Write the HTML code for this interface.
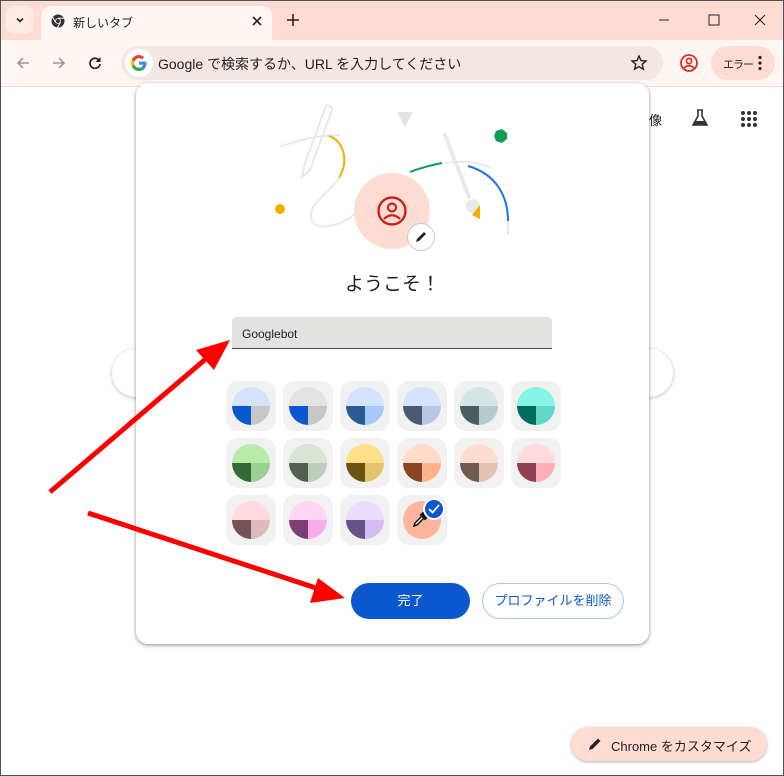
<!DOCTYPE html>
<html><head><meta charset="utf-8">
<style>
*{box-sizing:border-box;margin:0;padding:0}
body{width:784px;height:776px;overflow:hidden;background:#fff;font-family:"Liberation Sans","Noto Sans CJK JP",sans-serif;position:relative}
.frame{position:absolute;inset:0;border:1px solid #4a5360;pointer-events:none;z-index:50}
.tabstrip{position:absolute;left:0;top:0;width:784px;height:40px;background:#ffdcd2}
.toolbar{position:absolute;left:0;top:40px;width:784px;height:47px;background:#fff6f3;border-bottom:1px solid #f3d8d0}
.tab{position:absolute;left:41px;top:6px;width:231px;height:36px;background:#fff6f3;border-radius:10px 10px 0 0;font-size:12px;color:#222}
.abs{position:absolute}
.omni{position:absolute;left:121px;top:46px;width:542px;height:34px;border-radius:17px;background:#f3e7e4;font-size:14px;color:#1f1f1f}
.dlg{position:absolute;left:136px;top:83px;width:513px;height:561px;background:#fff;border-radius:12px;box-shadow:0 1px 3px rgba(0,0,0,.35),0 2px 6px rgba(0,0,0,.12);z-index:10}
.tile{position:absolute;width:50px;height:50px;border-radius:12px;background:#f1f1f1}
.c{position:absolute;left:6px;top:6px;width:38px;height:38px;border-radius:50%;overflow:hidden}
.c i{position:absolute;display:block}
</style></head><body>
<div class="tabstrip"></div>
<div class="abs" style="left:6px;top:6px;width:28px;height:28px;border-radius:8px;background:#ffe9e3"></div>
<svg class="abs" style="left:14px;top:14px" width="12" height="12"><path d="M3 4.5l3 3 3-3" fill="none" stroke="#222" stroke-width="1.6"/></svg>
<div class="tab">
<svg class="abs" style="left:10px;top:8px" width="14" height="14" viewBox="0 0 14 14"><circle cx="7" cy="7" r="6.5" fill="#333"/><circle cx="7" cy="7" r="2.8" fill="#fff"/><circle cx="7" cy="7" r="2" fill="#333"/><path d="M7 4.2h6M4.6 8.4L1.6 3.2M9.4 8.4L6.4 13.5" stroke="#fff" stroke-width="1"/></svg>
<span class="abs" style="left:32px;top:8px">新しいタブ</span>
<svg class="abs" style="left:210px;top:9px" width="12" height="12"><path d="M2 2l8 8M10 2l-8 8" stroke="#222" stroke-width="1.6"/></svg>
</div>
<svg class="abs" style="left:286px;top:13px" width="14" height="14"><path d="M7 1v12M1 7h12" stroke="#222" stroke-width="1.6"/></svg>
<svg class="abs" style="left:657px;top:13px" width="14" height="14"><path d="M2 7h10" stroke="#222" stroke-width="1"/></svg>
<svg class="abs" style="left:707px;top:13px" width="14" height="14"><rect x="2" y="2" width="10" height="10" fill="none" stroke="#222" stroke-width="1"/></svg>
<svg class="abs" style="left:753px;top:13px" width="14" height="14"><path d="M2 2l10 10M12 2L2 12" stroke="#222" stroke-width="1"/></svg>
<div class="toolbar"></div>
<svg class="abs" style="left:15px;top:55px" width="16" height="16"><path d="M14 8H3M8 3L3 8l5 5" fill="none" stroke="#999" stroke-width="1.6"/></svg>
<svg class="abs" style="left:51px;top:55px" width="16" height="16"><path d="M2 8h11M8 3l5 5-5 5" fill="none" stroke="#999" stroke-width="1.6"/></svg>
<svg class="abs" style="left:87px;top:55px" width="16" height="16"><path d="M12.5 6A5 5 0 1 0 13 9" fill="none" stroke="#222" stroke-width="1.7"/><path d="M13.5 2v5h-5z" fill="#222"/></svg>
<div class="omni">
<div class="abs" style="left:4px;top:3px;width:28px;height:28px;border-radius:50%;background:#fff"></div>
<svg class="abs" style="left:9px;top:8px" width="18" height="18" viewBox="0 0 18 18"><path d="M16.5 9.2c0-.6 0-1.1-.1-1.6H9v3h4.2a3.6 3.6 0 0 1-1.6 2.4v2h2.6c1.5-1.4 2.3-3.4 2.3-5.8z" fill="#4285f4"/><path d="M9 17c2.2 0 4-.7 5.3-2l-2.6-2c-.7.5-1.6.8-2.7.8-2.1 0-3.9-1.4-4.5-3.3H1.8v2.1A8 8 0 0 0 9 17z" fill="#34a853"/><path d="M4.5 10.5a4.800 4.8 0 0 1 0-3V5.4H1.8a8 8 0 0 0 0 7.2z" fill="#fbbc05"/><path d="M9 4.2c1.2 0 2.2.4 3 1.2l2.3-2.3A8 8 0 0 0 1.8 5.4l2.7 2.1C5.100 5.6 6.900 4.2 9 4.2z" fill="#ea4335"/></svg>
<span class="abs" style="left:37px;top:8px">Google で検索するか、URL を入力してください</span>
<svg class="abs" style="left:509px;top:8px" width="18" height="18" viewBox="0 0 18 18"><path d="M9 2l2 4.6 5 .4-3.8 3.3 1.2 4.9L9 12.6 4.6 15.2l1.2-4.9L2 7l5-.4z" fill="none" stroke="#222" stroke-width="1.4"/></svg>
</div>
<svg class="abs" style="left:679px;top:53px" width="20" height="20" viewBox="0 0 20 20"><circle cx="10" cy="10" r="8" fill="none" stroke="#d93025" stroke-width="1.8"/><circle cx="10" cy="8" r="2.6" fill="none" stroke="#d93025" stroke-width="1.7"/><path d="M5 15c3-3 7-3 10 0" fill="none" stroke="#d93025" stroke-width="1.7"/></svg>
<div class="abs" style="left:711px;top:46px;width:64px;height:34px;border-radius:17px;background:#ffdcd2"></div>
<span class="abs" style="left:723px;top:56px;font-size:11px;letter-spacing:-1px;color:#222">エラー</span>
<svg class="abs" style="left:757px;top:55px" width="6" height="16"><circle cx="3" cy="2.5" r="1.6" fill="#222"/><circle cx="3" cy="8" r="1.6" fill="#222"/><circle cx="3" cy="13.5" r="1.6" fill="#222"/></svg>

<span class="abs" style="left:636px;top:110px;font-size:13px;color:#222">画像</span>
<svg class="abs" style="left:690px;top:108px" width="20" height="20"><path d="M7 2h6M8 2v6l-5 9h14l-5-9V2" fill="none" stroke="#333" stroke-width="1.6"/><path d="M5 13h10l2 4H3z" fill="#333"/></svg>
<svg class="abs" style="left:740px;top:110px" width="18" height="18"><g fill="#333"><circle cx="3" cy="3" r="2"/><circle cx="9" cy="3" r="2"/><circle cx="15" cy="3" r="2"/><circle cx="3" cy="9" r="2"/><circle cx="9" cy="9" r="2"/><circle cx="15" cy="9" r="2"/><circle cx="3" cy="15" r="2"/><circle cx="9" cy="15" r="2"/><circle cx="15" cy="15" r="2"/></g></svg>

<div class="abs" style="left:112px;top:349px;width:561px;height:48px;border-radius:24px;background:#fff;box-shadow:0 1px 4px rgba(0,0,0,.25)"></div>

<div class="dlg">
<svg class="abs" style="left:124px;top:12px" width="270" height="190" viewBox="260 95 270 190">
<path d="M280 147c20-8 40-12 60-12" fill="none" stroke="#e8e9ed" stroke-width="2"/>
<path d="M329 136c15 5 20 25 10 42" fill="none" stroke="#f9ab00" stroke-width="2"/>
<path d="M339 178c-10 15-30 25-28 40 3 15 30 8 45-5" fill="none" stroke="#e8e9ed" stroke-width="2"/>
<path d="M326 106l-22 60-2 11 8-7 22-60c1-3-5-6-6-4z" fill="none" stroke="#e8e9ed" stroke-width="2"/>
<path d="M397 112h16l-8 15z" fill="#e3e3e7"/>
<path d="M410 172c10-4 22-7 32-9" fill="none" stroke="#0f9d58" stroke-width="2"/>
<path d="M445 163c20-3 36 0 46 5" fill="none" stroke="#e8e9ed" stroke-width="2"/>
<path d="M468 166c28 8 40 30 40 55" fill="none" stroke="#1a73e8" stroke-width="2"/>
<path d="M508 221v14" stroke="#e8e9ed" stroke-width="2"/>
<path d="M445 135l24 62" stroke="#e8e9ed" stroke-width="4" stroke-linecap="round"/>
<circle cx="473" cy="206" r="7" fill="#e8e9ed"/>
<path d="M472 215l8-10 0 14z" fill="#f9ab00"/>
<path d="M496 131l6-2 5 4 0 6-5 4-6-2-2-5z" fill="#0f9d58"/>
<circle cx="280" cy="209" r="5" fill="#f9ab00"/>
</svg>
<div class="abs" style="left:218px;top:90px;width:76px;height:76px;border-radius:50%;background:#ffdcd2"></div>
<svg class="abs" style="left:240px;top:112px" width="32" height="32" viewBox="0 0 32 32"><circle cx="16" cy="16" r="13.5" fill="none" stroke="#c5221f" stroke-width="2.4"/><circle cx="16" cy="12.5" r="4" fill="none" stroke="#c5221f" stroke-width="2.2"/><path d="M8 24c5-5 11-5 16 0" fill="none" stroke="#c5221f" stroke-width="2.2"/></svg>
<div class="abs" style="left:271px;top:140px;width:28px;height:28px;border-radius:50%;background:#fff;border:1px solid #c8c8c8"></div>
<svg class="abs" style="left:278px;top:147px" width="14" height="14"><path d="M2 12l1-3 7-7 2 2-7 7z" fill="#222"/></svg>
<div class="abs" style="left:0;top:186px;width:513px;text-align:center;font-size:19px;color:#1f1f1f">ようこそ！</div>
<div class="abs" style="left:96px;top:234px;width:320px;height:32px;background:#e2e3e1;border-radius:4px 4px 0 0;border-bottom:1px solid #444"></div>
<span class="abs" style="left:106px;top:244px;font-size:12px;color:#1f1f1f">Googlebot</span>

<div class="abs" style="left:215px;top:500px;width:119px;height:36px;border-radius:18px;background:#0b57d0;color:#fff;font-size:13px;text-align:center;line-height:36px">完了</div>
<div class="abs" style="left:346px;top:500px;width:142px;height:36px;border-radius:18px;border:1px solid #a8c7fa;color:#0b57d0;font-size:13px;text-align:center;line-height:34px">プロファイルを削除</div>
</div>

<div id="grid" style="position:absolute;left:0;top:0;z-index:11"></div>
<script>
var cs=[["#d3e3fd","#0b57d0","#c7c7c7"],["#e3e3e3","#0b57d0","#c7c7c7"],["#d3e3fd","#295c94","#a8c7fa"],["#d3e3fd","#4a5a75","#b8c8e2"],["#d3e5e6","#4b5b5e","#b6cacc"],["#84f5e4","#006b5f","#5fd8c8"],["#b6ebaa","#356a34","#9bd190"],["#d9e4d7","#535f51","#bfcbbd"],["#ffdf8a","#6b5413","#e4c36b"],["#ffdbca","#8c4522","#ffb38d"],["#ffdccd","#715a4e","#e2c3b4"],["#ffd9e0","#8f4153","#ffaeb9"],["#ffdadf","#735355","#ddbbbd"],["#ffd6f5","#7c3f73","#f8acea"],["#eadcfd","#66518a","#d4bcf6"]];
var h="";
for(var k=0;k<16;k++){var x=226+57*(k%6),y=381+57*Math.floor(k/6);
h+='<div class="tile" style="left:'+x+'px;top:'+y+'px"><div class="c" style="background:'+(k<15?cs[k][0]:"#ffb49c")+'">';
if(k<15)h+='<i style="left:0;top:19px;width:19px;height:19px;background:'+cs[k][1]+'"></i><i style="left:19px;top:19px;width:19px;height:19px;background:'+cs[k][2]+'"></i>';
h+='</div>';
if(k==15)h+='<svg style="position:absolute;left:14px;top:14px" width="20" height="20" viewBox="0 0 20 20"><path d="M3 17l1-3 7-7 2 2-7 7z" fill="#fff" stroke="#111" stroke-width="1.5"/><path d="M10 6l4 4M12 4l4 4-2 2-4-4z" stroke="#111" stroke-width="2" fill="#111"/></svg><div style="position:absolute;left:26px;top:3px;width:22px;height:22px;border-radius:50%;background:#0b57d0;border:2px solid #fff"></div><svg style="position:absolute;left:31px;top:9px" width="12" height="10"><path d="M1 5l3.5 3.5L11 1" fill="none" stroke="#fff" stroke-width="1.8"/></svg>';
h+='</div>';}
document.getElementById("grid").innerHTML=h;
</script>

<svg class="abs" style="left:0;top:0;z-index:20" width="784" height="776">
<path d="M50 492L208 357" stroke="#ff0000" stroke-width="5"/>
<path d="M230 340L196 350 214 370z" fill="#ff0000"/>
<path d="M88 513L322 590" stroke="#ff0000" stroke-width="5"/>
<path d="M345 598L318 578 310 603z" fill="#ff0000"/>
</svg>

<div class="abs" style="left:571px;top:727px;width:196px;height:34px;border-radius:17px;background:#ffdcd2;box-shadow:0 1px 3px rgba(0,0,0,.3)"></div>
<svg class="abs" style="left:587px;top:736px" width="16" height="16"><path d="M2 14l1-3.5 8-8 2.5 2.5-8 8z" fill="#222"/></svg>
<span class="abs" style="left:611px;top:736px;font-size:13px;color:#1f1f1f">Chrome をカスタマイズ</span>
<div class="frame"></div>
</body></html>
